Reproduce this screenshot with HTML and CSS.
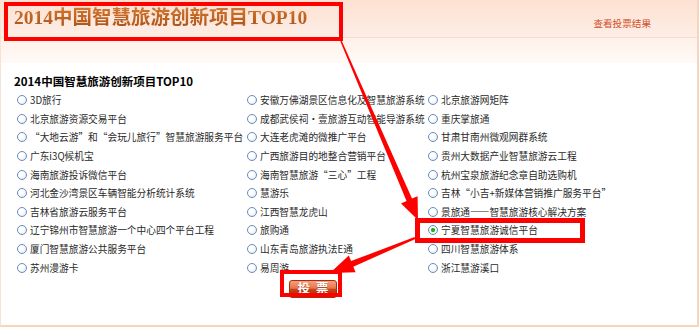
FILE: index.html
```html
<!DOCTYPE html>
<html lang="zh-CN">
<head>
    <meta charset="UTF-8">
    <meta name="viewport" content="width=device-width, initial-scale=1.0">
    <title>2014中国智慧旅游创新项目TOP10</title>
    <link rel="stylesheet" href="styles.css">
</head>
<body>
    <div class="page">
        <div class="head">
            <h1 class="head-title">2014中国智慧旅游创新项目TOP10</h1>
            <a class="result-link" href="#">查看投票结果</a>
        </div>
        <div class="head-fade"></div>

        <form class="vote" id="voteForm">
            <h2 class="vote-title">2014中国智慧旅游创新项目TOP10</h2>
            <div class="options">
                <label class="opt"><input type="radio" name="item" value="1">3D旅行</label>
                <label class="opt"><input type="radio" name="item" value="11">安徽万佛湖景区信息化及智慧旅游系统</label>
                <label class="opt"><input type="radio" name="item" value="21">北京旅游网矩阵</label>

                <label class="opt"><input type="radio" name="item" value="2">北京旅游资源交易平台</label>
                <label class="opt"><input type="radio" name="item" value="12">成都武侯祠·壹旅游互动智能导游系统</label>
                <label class="opt"><input type="radio" name="item" value="22">重庆掌旅通</label>

                <label class="opt"><input type="radio" name="item" value="3">“大地云游”和“会玩儿旅行”智慧旅游服务平台</label>
                <label class="opt"><input type="radio" name="item" value="13">大连老虎滩的微推广平台</label>
                <label class="opt"><input type="radio" name="item" value="23">甘肃甘南州微观网群系统</label>

                <label class="opt"><input type="radio" name="item" value="4">广东i3Q候机宝</label>
                <label class="opt"><input type="radio" name="item" value="14">广西旅游目的地整合营销平台</label>
                <label class="opt"><input type="radio" name="item" value="24">贵州大数据产业智慧旅游云工程</label>

                <label class="opt"><input type="radio" name="item" value="5">海南旅游投诉微信平台</label>
                <label class="opt"><input type="radio" name="item" value="15">海南智慧旅游“三心”工程</label>
                <label class="opt"><input type="radio" name="item" value="25">杭州宝泉旅游纪念章自助选购机</label>

                <label class="opt"><input type="radio" name="item" value="6">河北金沙湾景区车辆智能分析统计系统</label>
                <label class="opt"><input type="radio" name="item" value="16">慧游乐</label>
                <label class="opt"><input type="radio" name="item" value="26">吉林“小吉+新媒体营销推广服务平台”</label>

                <label class="opt"><input type="radio" name="item" value="7">吉林省旅游云服务平台</label>
                <label class="opt"><input type="radio" name="item" value="17">江西智慧龙虎山</label>
                <label class="opt"><input type="radio" name="item" value="27">景旅通——智慧旅游核心解决方案</label>

                <label class="opt"><input type="radio" name="item" value="8">辽宁锦州市智慧旅游一个中心四个平台工程</label>
                <label class="opt"><input type="radio" name="item" value="18">旅购通</label>
                <label class="opt"><input type="radio" name="item" value="28" checked>宁夏智慧旅游诚信平台</label>

                <label class="opt"><input type="radio" name="item" value="9">厦门智慧旅游公共服务平台</label>
                <label class="opt"><input type="radio" name="item" value="19">山东青岛旅游执法E通</label>
                <label class="opt"><input type="radio" name="item" value="29">四川智慧旅游体系</label>

                <label class="opt"><input type="radio" name="item" value="10">苏州漫游卡</label>
                <label class="opt"><input type="radio" name="item" value="20">易周游</label>
                <label class="opt"><input type="radio" name="item" value="30">浙江慧游溪口</label>
            </div>
            <div class="actions">
                <button type="submit" class="vote-btn">投 票</button>
            </div>
        </form>

        <!-- red annotation marks drawn over the page -->
        <svg class="marks" width="700" height="327" viewBox="0 0 700 327">
            <rect x="6" y="4" width="335" height="35" fill="none" stroke="#f00" stroke-width="4"/>
            <rect x="417.5" y="220.5" width="165" height="20" fill="none" stroke="#f00" stroke-width="5"/>
            <rect x="282" y="272" width="58" height="23" fill="none" stroke="#f00" stroke-width="4"/>
            <polygon fill="#f00" points="341.7,40.7 412,198.6 417.6,196.2 418,220 401,203.4 406.5,201 340.3,41.3"/>
            <polygon fill="#f00" points="414.6,237.1 351.1,261.1 348.8,255.6 330,273 355.6,272.2 353.3,266.7 415.4,238.9"/>
        </svg>
    </div>

    <script>
        document.getElementById('voteForm').addEventListener('submit', (e) => {
            e.preventDefault();
        });
    </script>
</body>
</html>
```

FILE: styles.css
```css
body {
    margin: 0;
    background: #fff;
    font-family: "Noto Sans CJK SC", sans-serif;
}
.page {
    position: relative;
    width: 699px;
    height: 327px;
    box-sizing: border-box;
    border-left: 1px solid #f8e2d2;
    border-right: 2px solid #f5d6bd;
    border-bottom: 2px solid #f5d6bd;
    overflow: hidden;
}
.head {
    height: 37px;
    display: flex;
    justify-content: space-between;
    align-items: flex-start;
    padding: 0 46px 0 13px;
    border-bottom: 1px solid #f7dccc;
    background: linear-gradient(#fde1d2, #fdeee6);
}
.head-title {
    margin: 0;
    font: bold 19.5px/36px "Liberation Serif", "Noto Sans CJK SC", serif;
    background: linear-gradient(#dd8438, #9e430d);
    -webkit-background-clip: text;
    background-clip: text;
    color: transparent;
}
.result-link {
    margin-top: 17px;
    font-size: 9.6px;
    line-height: 12px;
    color: #d24f28;
    text-decoration: none;
}
.head-fade {
    height: 25px;
    background: linear-gradient(#fff1e9, #fffaf7);
}
.vote {
    padding: 12px 0 0 13px;
}
.vote-title {
    margin: 0;
    font-size: 11.5px;
    line-height: 13px;
    font-weight: bold;
    color: #000;
}
.options {
    display: grid;
    grid-template-columns: 230px 181px 1fr;
    grid-auto-rows: 18.6px;
    margin-top: 3px;
}
.opt {
    display: flex;
    align-items: center;
    padding-left: 3px;
    white-space: nowrap;
    font-size: 9.7px;
    color: #2a2a2a;
}
.opt input {
    appearance: none;
    -webkit-appearance: none;
    width: 10px;
    height: 10px;
    margin: 0 3px 0 0;
    border: 1px solid #6a8cbc;
    border-radius: 50%;
    background: radial-gradient(circle at 35% 35%, #fff 30%, #dce3ec);
    flex: none;
}
.opt input:checked {
    background: radial-gradient(circle, #22b022 0 1.8px, #fff 2.4px, #dce3ec 100%);
}
.actions {
    margin-top: -3px;
    padding-left: 275px;
}
.vote-btn {
    width: 48px;
    height: 18px;
    padding: 0;
    border: 1px solid #a8300c;
    border-radius: 3px;
    background: linear-gradient(#f6a07c, #e8754c 45%, #c8421a 52%, #a52806);
    color: #fff;
    font: bold 12.5px/16px "Liberation Serif", "Noto Sans CJK SC", serif;
    word-spacing: 3px;
    text-shadow: 0 1px 0 rgba(120, 30, 0, 0.5);
    cursor: pointer;
}
.marks {
    position: absolute;
    top: 0;
    left: -1px;
    pointer-events: none;
}
```
